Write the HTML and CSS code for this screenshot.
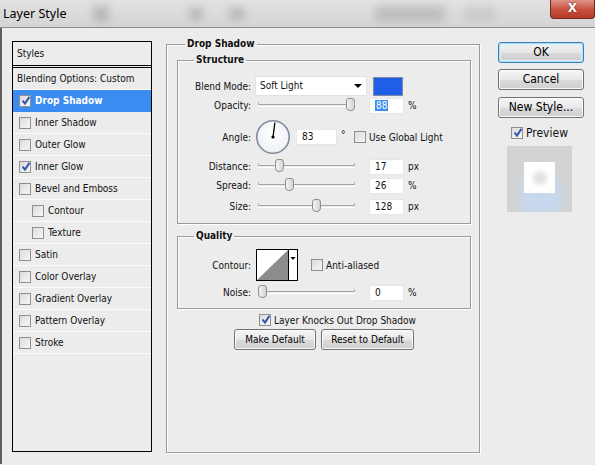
FILE: index.html
```html
<!DOCTYPE html>
<html>
<head>
<meta charset="utf-8">
<link rel="stylesheet" href="styles.css">
</head>
<body>
<div class="titlebar">
  <span class="title">Layer Style</span>
  <span class="blob b1"></span>
  <span class="blob b2"></span>
  <span class="blob b3"></span>
  <span class="blob b4"></span>
  <span class="blob b5"></span>
  <span class="close">X</span>
</div>
<div class="main">
  <div class="styles">
    <div class="styles-head">Styles</div>
    <div class="row">Blending Options: Custom</div>
    <div class="row sel"><span class="cb on"></span><b>Drop Shadow</b></div>
    <div class="row"><span class="cb"></span>Inner Shadow</div>
    <div class="row"><span class="cb"></span>Outer Glow</div>
    <div class="row"><span class="cb on"></span>Inner Glow</div>
    <div class="row"><span class="cb"></span>Bevel and Emboss</div>
    <div class="row sub"><span class="cb"></span>Contour</div>
    <div class="row sub"><span class="cb"></span>Texture</div>
    <div class="row"><span class="cb"></span>Satin</div>
    <div class="row"><span class="cb"></span>Color Overlay</div>
    <div class="row"><span class="cb"></span>Gradient Overlay</div>
    <div class="row"><span class="cb"></span>Pattern Overlay</div>
    <div class="row"><span class="cb"></span>Stroke</div>
  </div>

  <fieldset class="group outer">
    <legend>Drop Shadow</legend>
    <fieldset class="group inner structure">
      <legend>Structure</legend>
      <div class="frow r-blend">
        <span class="lbl">Blend Mode:</span>
        <span class="select">Soft Light<span class="arrow"></span></span>
        <span class="swatch"></span>
      </div>
      <div class="frow r-op">
        <span class="lbl">Opacity:</span>
        <span class="slider"><span class="thumb" style="left:88px"></span></span>
        <span class="field"><span class="hl">88</span></span>
        <span class="unit">%</span>
      </div>
      <div class="frow r-angle">
        <span class="lbl">Angle:</span>
        <span class="dial">
          <svg width="36" height="36" viewBox="0 0 36 36">
            <defs>
              <radialGradient id="dg" cx="50%" cy="40%" r="60%">
                <stop offset="0" stop-color="#ffffff"/>
                <stop offset="1" stop-color="#eef0f4"/>
              </radialGradient>
            </defs>
            <circle cx="18" cy="18" r="16.2" fill="url(#dg)" stroke="#7f8ba0" stroke-width="1.6"/>
            <line x1="18" y1="18" x2="19.9" y2="3.5" stroke="#000" stroke-width="1.3"/>
            <circle cx="18" cy="18" r="1.6" fill="#000"/>
          </svg>
        </span>
        <span class="field angle">83</span>
        <span class="deg">°</span>
        <span class="cb"></span><span class="cbtext">Use Global Light</span>
      </div>
      <div class="frow r-dist">
        <span class="lbl">Distance:</span>
        <span class="slider"><span class="thumb" style="left:17px"></span></span>
        <span class="field">17</span>
        <span class="unit">px</span>
      </div>
      <div class="frow r-spread">
        <span class="lbl">Spread:</span>
        <span class="slider"><span class="thumb" style="left:27px"></span></span>
        <span class="field">26</span>
        <span class="unit">%</span>
      </div>
      <div class="frow r-size">
        <span class="lbl">Size:</span>
        <span class="slider"><span class="thumb" style="left:54px"></span></span>
        <span class="field">128</span>
        <span class="unit">px</span>
      </div>
    </fieldset>

    <fieldset class="group inner quality">
      <legend>Quality</legend>
      <div class="frow r-contour">
        <span class="lbl">Contour:</span>
        <span class="contour">
          <svg width="42" height="32" viewBox="0 0 42 32">
            <rect x="0.5" y="0.5" width="41" height="31" fill="#fff" stroke="#000"/>
            <polygon points="1,31 32,1 32,31" fill="#8c8c8c"/>
            <line x1="32.5" y1="1" x2="32.5" y2="31" stroke="#000"/>
            <polygon points="34.5,8 39.5,8 37,11" fill="#000"/>
          </svg>
        </span>
        <span class="cb"></span><span class="cbtext">Anti-aliased</span>
      </div>
      <div class="frow r-noise">
        <span class="lbl">Noise:</span>
        <span class="slider"><span class="thumb" style="left:0px"></span></span>
        <span class="field">0</span>
        <span class="unit">%</span>
      </div>
    </fieldset>

    <div class="knock"><span class="cb on"></span><span class="cbtext">Layer Knocks Out Drop Shadow</span></div>
    <div class="defaults">
      <span class="btn small w81">Make Default</span>
      <span class="btn small w93">Reset to Default</span>
    </div>
  </fieldset>

  <div class="side">
    <span class="btn big ok">OK</span>
    <span class="btn big cancel">Cancel</span>
    <span class="btn big">New Style...</span>
    <div class="preview-check"><span class="cb on"></span><span class="ptext">Preview</span></div>
    <div class="preview">
      <div class="pshadow"></div>
      <div class="psquare"><span class="pdot"></span></div>
    </div>
  </div>
</div>
</body>
</html>
```
FILE: styles.css
```css
* { box-sizing: border-box; }
html, body { margin: 0; padding: 0; }
body {
  width: 595px;
  height: 465px;
  overflow: hidden;
  background: #ececec;
  font-family: "DejaVu Sans Condensed", "Liberation Sans", Tahoma, sans-serif;
  font-stretch: condensed;
  font-size: 10px;
  color: #111;
}

/* title bar */
.titlebar {
  height: 28px;
  display: flex;
  align-items: flex-start;
  background: linear-gradient(#e2e2e2, #d4d4d4);
  border-bottom: 1px solid #8c8c8c;
  overflow: hidden;
}
.title {
  font-family: "Noto Sans", "Open Sans", sans-serif;
  font-stretch: normal;
  font-size: 12.5px;
  color: #000;
  margin: 5px 0 0 3px;
  width: 76px;
}
.blob { display: block; background: #9a9a9a; filter: blur(4px); opacity: .55; }
.b1 { width: 16px; height: 16px; margin: 6px 0 0 14px; }
.b2 { width: 14px; height: 12px; margin: 8px 0 0 80px; }
.b3 { width: 16px; height: 12px; margin: 8px 0 0 26px; }
.b4 { width: 70px; height: 16px; margin: 6px 0 0 130px; background: #a8a8a8; }
.b5 { width: 30px; height: 14px; margin: 7px 0 0 20px; background: #bdbdbd; }
.close {
  margin-left: auto;
  width: 45px;
  height: 19px;
  background: linear-gradient(#dc9486, #c9503e 55%, #b43c2a);
  border: 1px solid #6b2b22;
  border-top: none;
  border-radius: 0 0 4px 4px;
  color: #fff;
  font-family: "DejaVu Sans", sans-serif;
  font-stretch: normal;
  font-weight: bold;
  font-size: 12px;
  text-align: center;
  line-height: 17px;
  text-shadow: 0 0 2px #5a1a10;
}

/* main */
.main {
  height: 436px;
  display: flex;
  align-items: flex-start;
  border-left: 2px solid #5e5e5e;
  padding: 13px 0 0 10px;
}

.styles {
  width: 140px;
  height: 411px;
  border: 1px solid #000;
  background: #ececec;
  flex: none;
}
.styles-head {
  height: 26px;
  line-height: 23px;
  padding-left: 4px;
  border-bottom: 3px double #000;
}
.row {
  height: 22px;
  line-height: 21px;
  padding-left: 4px;
  border-bottom: 1px solid #fbfbfb;
  display: flex;
  align-items: center;
  white-space: nowrap;
}
.row .cb { margin: 0 4px 0 2px; }
.row.sub { padding-left: 17px; }
.row.sel { background: #3b8cf0; color: #fff; border-bottom-color: #3b8cf0; }
.row.sel b { font-weight: bold; }

.cb {
  display: inline-block;
  flex: none;
  width: 12px;
  height: 12px;
  border: 1px solid #8e8f8f;
  background: linear-gradient(135deg, #dcdcdc, #f6f6f6);
  position: relative;
}
.cb.on::after {
  content: "";
  position: absolute;
  left: 2px; top: 0px;
  width: 8px; height: 9px;
  background: url("data:image/svg+xml;utf8,<svg xmlns='http://www.w3.org/2000/svg' width='8' height='9' viewBox='0 0 8 9'><path d='M0.6 4.6 L3 7.6 L7.4 0.8' fill='none' stroke='%233454b4' stroke-width='2'/></svg>") no-repeat;
}

/* fieldsets */
.group {
  margin: 0;
  padding: 0;
  border: 1px solid #9a9a9a;
  box-shadow: inset 1px 1px 0 #fff, 1px 1px 0 #fff;
  min-width: 0;
}
.group legend {
  font-weight: bold;
  font-size: 10px;
  line-height: 14px;
  padding: 0 2px;
  color: #111;
}
.outer {
  flex: none;
  width: 314px;
  height: 416px;
  margin: -4px 0 0 14px;
  padding: 0 8px 0 10px;
}
.outer > legend { margin-left: 8px; }
.inner > legend { margin-left: 16px; }
.structure {
  height: 171px;
  margin-top: 2px;
  padding-top: 1px;
}
.quality {
  height: 80px;
  margin-top: 5px;
  padding-top: 1px;
}

.frow {
  display: flex;
  align-items: center;
  white-space: nowrap;
}
.lbl {
  width: 73px;
  text-align: right;
  flex: none;
}
.r-blend { height: 20px; margin-top: 8px; }
.r-op { height: 17px; margin-top: 1px; }
.r-angle { height: 36px; margin-top: 5px; }
.r-dist { height: 17px; margin-top: 3px; }
.r-spread { height: 17px; margin-top: 2px; }
.r-size { height: 17px; margin-top: 4px; }
.r-contour { height: 32px; margin-top: 5px; }
.r-noise { height: 17px; margin-top: 3px; }

.select {
  margin-left: 4px;
  width: 112px;
  height: 20px;
  background: #fff;
  border: 1px solid #e2e2e2;
  padding-left: 4px;
  line-height: 18px;
  display: flex;
  align-items: center;
}
.arrow {
  margin-left: auto;
  margin-right: 4px;
  width: 0; height: 0;
  border-left: 4px solid transparent;
  border-right: 4px solid transparent;
  border-top: 4px solid #000;
}
.swatch {
  margin-left: 6px;
  width: 30px;
  height: 19px;
  background: #1f5ee6;
  border: 1px solid #7c8aa8;
}
.slider {
  position: relative;
  margin-left: 7px;
  width: 97px;
  height: 3px;
  border-top: 1px solid #a4a4a4;
  border-bottom: 1px solid #fff;
  flex: none;
}
.slider::before, .slider::after {
  content: "";
  position: absolute;
  top: -3px;
  width: 1px;
  height: 3px;
  background: #b0b0b0;
}
.slider::before { left: 0; }
.slider::after { right: 0; }
.thumb {
  position: absolute;
  top: -7px;
  width: 9px;
  height: 13px;
  border: 1px solid #8d8d8d;
  border-radius: 3px 3px 4px 4px;
  background: linear-gradient(90deg, #f4f4f4, #d4d4d4);
}
.field {
  margin-left: 14px;
  width: 35px;
  height: 16px;
  background: #fff;
  border: 1px solid #e6e6e6;
  line-height: 14px;
  padding-left: 5px;
  flex: none;
}
.hl { background: #3b8cf0; color: #fff; padding: 0 1px; }
.unit { margin-left: 4px; }
.dial { margin-left: 4px; width: 36px; height: 36px; flex: none; }
.dial svg { display: block; }
.field.angle { margin-left: 5px; width: 41px; }
.deg { margin: -6px 0 0 4px; font-size: 10px; width: 9px; }
.r-angle .cb { margin-left: 4px; }
.cbtext { margin-left: 3px; }
.contour { margin-left: 5px; width: 42px; height: 32px; flex: none; }
.contour svg { display: block; }
.r-contour .cb { margin-left: 13px; }

.knock {
  display: flex;
  align-items: center;
  margin: 4px 0 0 82px;
  height: 14px;
}
.defaults {
  display: flex;
  gap: 5px;
  margin: 2px 0 0 57px;
}

/* buttons */
.btn {
  display: block;
  text-align: center;
  background: linear-gradient(#f6f6f6, #e8e8e8 50%, #dadada 52%, #d0d0d0);
  border: 1px solid #707070;
  border-radius: 3px;
  box-shadow: inset 0 0 0 1px #fbfbfb;
  color: #000;
  white-space: nowrap;
}
.btn.small { height: 21px; line-height: 19px; font-size: 10px; }
.w81 { width: 82px; }
.w93 { width: 93px; }

.side {
  margin: 1px 0 0 18px;
  width: 86px;
  flex: none;
  display: flex;
  flex-direction: column;
}
.btn.big {
  height: 21px;
  line-height: 19px;
  font-size: 12px;
  margin-bottom: 7px;
}
.btn.ok {
  margin-bottom: 6px;
  border-color: #3c7fb1;
  box-shadow: inset 0 0 0 1px #a8def7, inset 0 0 0 2px #d8f1fc;
  background: linear-gradient(#f2f2f2, #e6e6e6 50%, #d8d8d8 52%, #cdcdcd);
}
.preview-check {
  display: flex;
  align-items: center;
  margin: 0 0 0 13px;
  height: 15px;
}
.ptext { margin-left: 3px; font-size: 12px; }
.preview {
  margin: 6px 0 0 9px;
  width: 65px;
  height: 66px;
  background: #d3d3d3;
  display: flex;
  align-items: center;
  justify-content: center;
  position: relative;
  overflow: hidden;
}
.pshadow {
  position: absolute;
  left: 14px; top: 34px;
  width: 40px; height: 34px;
  background: #c7d8ee;
  filter: blur(4px);
}
.psquare {
  position: relative;
  width: 31px;
  height: 31px;
  background: #fff;
  display: flex;
  align-items: center;
  justify-content: center;
  margin-top: -3px;
}
.pdot {
  width: 14px; height: 14px;
  border-radius: 50%;
  background: #e2e2e2;
  filter: blur(2px);
}
```
